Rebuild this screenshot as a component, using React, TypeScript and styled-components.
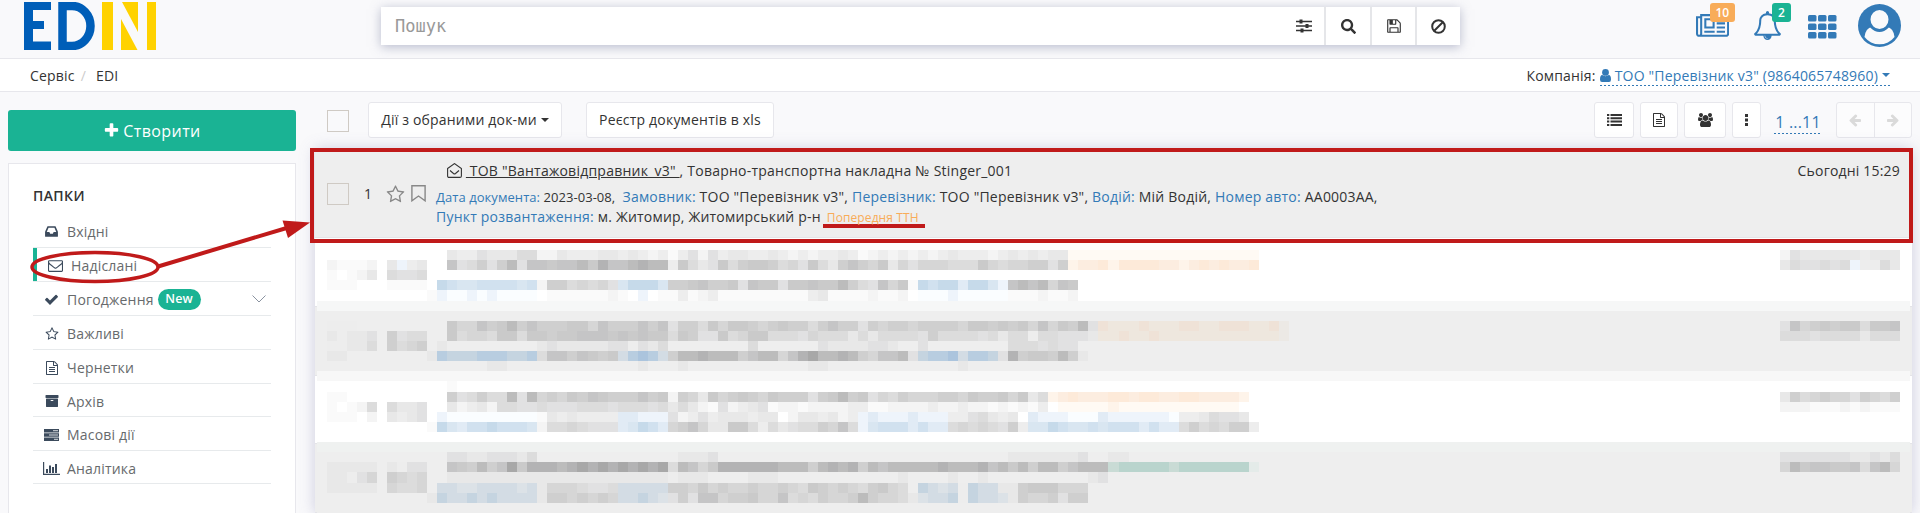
import React from 'react';
import styled, { createGlobalStyle } from 'styled-components';
import { FaSearch } from 'react-icons/fa';

const Global = createGlobalStyle`
  * { box-sizing: border-box; }
  body { margin: 0; background: #f9f9fb; font-family: "Open Sans", "Noto Sans", sans-serif; font-size: 14px; letter-spacing: 0.19px; color: #333; }
`;

const Page = styled.div`
  width: 1920px;
  height: 513px;
  overflow: hidden;
  display: flex;
  flex-direction: column;
`;

const Header = styled.header`
  height: 59px;
  flex: none;
  display: flex;
  border-bottom: 1px solid #e7e7ec;
  padding: 2px 26px 0 24px;
`;

const Search = styled.div`
  display: flex;
  width: 1079px;
  height: 38px;
  margin: 5px 0 0 225px;
  background: #fff;
  box-shadow: 0 2px 10px rgba(120, 125, 160, 0.5);
`;

const SearchInput = styled.div`
  flex: 1;
  padding: 0 0 0 14px;
  font: 17px/39px "DejaVu Sans Mono", monospace;
  letter-spacing: 0;
  color: #999;
`;

const SearchButton = styled.div<{ $w: number; $first?: boolean }>`
  width: ${(p) => p.$w}px;
  display: flex;
  align-items: center;
  justify-content: center;
  border-left: ${(p) => (p.$first ? 'none' : '2px solid #e5e6e9')};
`;

const HeaderIcons = styled.div`
  margin-left: auto;
  display: flex;
  align-items: flex-start;
  color: #337ab7;
`;

const HeaderIcon = styled.div<{ $mt: number; $mr: number }>`
  position: relative;
  margin: ${(p) => `${p.$mt}px ${p.$mr}px 0 0`};
  display: flex;
`;

const Counter = styled.span<{ $bg: string; $x: number; $y: number; $w: number }>`
  position: absolute;
  left: ${(p) => p.$x}px;
  top: ${(p) => p.$y}px;
  width: ${(p) => p.$w}px;
  height: 19px;
  line-height: 19px;
  text-align: center;
  font-size: 12px;
  font-weight: 600;
  letter-spacing: 0;
  color: #fff;
  border-radius: 3px;
  background: ${(p) => p.$bg};
`;

const Crumbs = styled.nav`
  height: 33px;
  flex: none;
  display: flex;
  align-items: center;
  padding: 0 30px 0 30px;
  background: #fff;
  border-bottom: 1px solid #e7e7ec;
`;

const Slash = styled.span`
  color: #ccc;
  margin: 0 10px 0 6px;
`;

const Company = styled.div`
  margin-left: auto;
  display: flex;
  align-items: center;
`;

const dashes = 'repeating-linear-gradient(90deg, #337ab7 0 2px, transparent 2px 4px) left bottom / 100% 1px no-repeat';

const CompanyLink = styled.span`
  margin: 1px 0 0 4px;
  height: 20px;
  padding-bottom: 1px;
  display: flex;
  align-items: center;
  gap: 4px;
  color: #337ab7;
  background: ${dashes};
`;

const Caret = styled.i`
  border: 4px solid transparent;
  border-top-color: currentColor;
  border-bottom: none;
  flex: none;
`;

const Main = styled.main`
  flex: 1;
  display: flex;
  min-height: 0;
`;

const Side = styled.aside`
  width: 288px;
  margin: 18px 0 0 8px;
  display: flex;
  flex-direction: column;
  flex: none;
`;

const Create = styled.div`
  height: 41px;
  flex: none;
  display: flex;
  align-items: center;
  justify-content: center;
  gap: 3px;
  font-size: 16px;
  letter-spacing: 0.4px;
  color: #fff;
  background: #1ab394;
  border-radius: 3px;
`;

const Folders = styled.div`
  flex: 1;
  margin-top: 12px;
  padding: 22px 24px 0;
  background: #fff;
  border: 1px solid #e7e7ec;
  border-bottom: none;
`;

const FoldersTitle = styled.div`
  height: 28px;
  line-height: 20px;
  font-size: 14px;
  font-weight: 600;
  letter-spacing: 0.4px;
`;

const Folder = styled.div<{ $h: number; $active?: boolean }>`
  height: ${(p) => p.$h}px;
  display: flex;
  align-items: center;
  color: #676a6c;
  border-bottom: 1px solid #e7eaec;
  padding: 2px 0 0 ${(p) => (p.$active ? 14 : 10)}px;
  box-shadow: ${(p) => (p.$active ? 'inset 4px 0 0 #1ab394' : 'none')};
`;

const FolderIcon = styled.span`
  width: 17px;
  margin-right: 7px;
  display: flex;
  justify-content: center;
  color: #3b4a5c;
`;

const NewTag = styled.span`
  margin: 0 0 0 4px;
  width: 43px;
  height: 21px;
  line-height: 20px;
  text-align: center;
  border-radius: 11px;
  background: #1ab394;
  color: #fff;
  font-size: 12.5px;
  font-weight: 600;
`;

const Chevron = styled.span`
  margin: 0 5px 2px auto;
  display: flex;
`;

const Content = styled.section`
  flex: 1;
  min-width: 0;
  display: flex;
  flex-direction: column;
  padding: 0 8px 0 19px;
`;

const Toolbar = styled.div`
  height: 57px;
  flex: none;
  display: flex;
  align-items: center;
  padding: 0 0 1px 12px;
`;

const Checkbox = styled.span<{ $mt: number }>`
  width: 22px;
  height: 22px;
  margin-top: ${(p) => p.$mt}px;
  border: 1px solid #cfcac4;
  flex: none;
`;

const ToolButton = styled.div<{ $w: number; $ml: number }>`
  width: ${(p) => p.$w}px;
  height: 36px;
  margin-left: ${(p) => p.$ml}px;
  padding-bottom: 1px;
  display: flex;
  align-items: center;
  justify-content: center;
  gap: 4px;
  background: #fff;
  border: 1px solid #e7e7ec;
  border-radius: 3px;
  flex: none;
`;

const Spacer = styled.span`
  flex: 1;
`;

const Pages = styled.span`
  margin: 4px 14px 0 13px;
  width: 48px;
  text-align: center;
  height: 24px;
  line-height: 24px;
  font-size: 16px;
  color: #337ab7;
  white-space: nowrap;
  background: ${dashes};
`;

const Pager = styled.div`
  width: 76px;
  height: 36px;
  display: flex;
  background: #fcfcfd;
  border: 1px solid #e7e7ec;
  border-radius: 3px;
  color: #dadada;
`;

const PagerHalf = styled.span<{ $flip?: boolean }>`
  flex: 1;
  display: flex;
  align-items: center;
  justify-content: center;
  & + & { border-left: 1px solid #e7e7ec; }
  svg { transform: ${(p) => (p.$flip ? 'scaleX(-1)' : 'none')}; }
`;

const List = styled.div`
  position: relative;
  flex: 1;
  width: 1597px;
  box-shadow: 0 0 14px rgba(120, 120, 170, 0.35);
`;

const Row = styled.div<{ $h: number; $grey?: boolean }>`
  height: ${(p) => p.$h}px;
  background: ${(p) => (p.$grey ? '#eee' : '#fff')};
  border-bottom: 1px solid #e4e4e8;
`;

const DocRow = styled(Row)`
  display: flex;
  padding: 0 12px;
`;

const Num = styled.span`
  width: 22px;
  margin: 35px 0 0 15px;
`;

const Marks = styled.div`
  display: flex;
  gap: 6px;
  margin-top: 36px;
  height: 18px;
  color: #888;
`;

const Doc = styled.div`
  flex: 1;
  margin-left: 10px;
`;

const DocTitle = styled.div`
  display: flex;
  align-items: center;
  height: 21px;
  margin: 11px 0 6px 11px;
  white-space: pre;
  letter-spacing: 0.23px;
`;

const DocLine = styled.div`
  height: 20px;
  line-height: 20px;
  white-space: pre;
  letter-spacing: 0.21px;
`;

const Key = styled.span<{ $small?: boolean }>`
  color: #337ab7;
  font-size: ${(p) => (p.$small ? 13 : 14)}px;
  letter-spacing: ${(p) => (p.$small ? 0.06 : 0.21)}px;
`;

const Small = styled.span`
  font-size: 13px;
  letter-spacing: 0.05px;
`;

const Prelim = styled.span`
  display: inline-block;
  width: 102px;
  height: 21px;
  margin-left: 2px;
  vertical-align: top;
  line-height: 21px;
  padding-left: 4px;
  font-size: 12px;
  letter-spacing: 0.1px;
  color: #f8ac59;
  border-bottom: 4px solid #c01a1a;
`;

const Time = styled.div`
  margin-top: 12px;
  line-height: 20px;
`;

const Frame = styled.div`
  position: absolute;
  left: -5px;
  top: -1px;
  width: 1603px;
  height: 95px;
  border: 4px solid #c01a1a;
`;

const Mosaic = styled.div`
  position: absolute;
  left: 2px;
  top: 101px;
  width: 1593px;
`;

const MosaicLine = styled.div<{ $bg: string }>`
  display: grid;
  grid-template-columns: repeat(159, minmax(0, 1fr));
  height: 10.12px;
  background: ${(p) => p.$bg};
`;

const Callout = styled.svg`
  position: absolute;
  left: 28px;
  top: 215px;
  pointer-events: none;
`;

const shades: Record<string, string> = {
  a: '#fafafa', b: '#f4f4f4', c: '#ededed', d: '#e8e8e8', e: '#e1e1e2', f: '#dcdcdc', g: '#d6d6d6',
  h: '#cfcfcf', i: '#cacaca', j: '#c5c5c6', k: '#bcbcbc', l: '#b3b3b4', m: '#a8a8a8',
  A: '#fafdff', B: '#eef4fb', C: '#e1ebf5', D: '#d9e6f1', E: '#d1e1ef', F: '#c6daea', G: '#b8cde0', H: '#abc4dd',
  X: '#c5d4e0', Y: '#d3dce4', Z: '#dce2e7',
  O: '#fffaf4', P: '#fef4ea', Q: '#fcede0', R: '#fdead9', S: '#eee7de', T: '#efe2d7', N: '#ece9e5',
  U: '#b9d4cd', V: '#c9dbd5', W: '#e4ebe9',
};

const mosaic: [string, string][] = [
  ['#fff', '13:dccedddf 21:fbbdcccddcdcbcaceb 39:ecddccdcbcbccdcabcbcbcbcdcccbcdcdcdd 75:OOOOOOOOOOOOOOOOOOO 146:beddddddcddd'],
  ['#fff', '1:baaab 7:dBcd 13:jefhehkejjijjkiljjklkkcifd 39:eifhiihfgeifdhjhgidgegggfffigfgghhehbhfe 75:PQQRPRRRRQQPQRQRQQR 146:dfeefefBccfd'],
  ['#fff', '1:a.abd 7:feef'],
  ['#fff', '1:aaa 7:aaaa 12:FEDDEEEEDEbhhfgfgeDFFFDhhij 39:hhiejiieiijiikhfejgiaFEFFCFFDBjkjkgji'],
  ['#fff', '11:aBAABABAAAA 23:aaaaaaba.B.aacab 39:caaaaaaaaacdaaaabaab.AAABAAAAAaaabaab'],
  ['#f6f7f7', ''],
  ['#eee', ''],
  ['#eee', '1:ccc 13:iggjhikhjhhhiigjhhhjhjehhf 39:igiihghihhfhjhhehghhghhhhgiihihigjgihkeTSSSTSSSTTSSTTTSSTN 146:ejghihiifiij'],
  ['#eee', '1:dcdde 7:heff 13:ifggfiifiihiijjjijijiifihe 39:eifgiifffegfffdfdffffehffffefdffcffeeedSSTSSTSSSSSSSSSSSSN 146:fffeffffdfff'],
  ['#eee', '1:ccddf 7:hfgh 12:d 22:dedddddeecedf 43:f 50:eddddeed 60:e 69:fffefee'],
  ['#eee', '1:dd 11:dGXXXGGGXXGfjjhjihiYGHGYhkkl 39:kkkhjkkgjlmkklkhgjjkeXGGHYGGXelhiihkhd'],
  ['#eee', '17:dd 32:d 36:d 49:dd 64:d'],
  ['#f7f7f7', ''],
  ['#fff', '13:a'],
  ['#fff', '1:aa 13:hefhffkekghgihjihhhjhibhgd 39:ighihgihhhehikhiegfhggghhgihhigidfPQRQQQRRQRRQQRRQQQQP 146:dhfghggehgfh'],
  ['#fff', '1:a.abf 7:fdde 13:dbcdbffeefeeefffefffefdfdb 39:aebcdeabbabbbbccaabbbbcbbcbbababac.OOOOOPOOOOOOOOOOOO 146:bbbaaababaaa'],
  ['#fff', '1:aaa.b 7:dcde 12:BAAAAAAAAAadcdccccCCBBBebce 39:cdddcdd.bddcdbcBCBBBCBBBccefdcd.CBBBAAACBBBBBBAccdfeed'],
  ['#fff', '11:aFDCEEFEEEDbffgfeeeCDFECghjg 39:ddiifcfdeffhgjfBDEEECECCfgfgfehcDDFEDDEDEEECECCfhfgfhhc'],
  ['#fff', ''],
  ['#eff1f0', ''],
  ['#eee', '13:eeddeeedf 36:ddde 69:ddddddde 79:dd 146:eeeeeeeddedf'],
  ['#eee', '1:ddddd 7:dcee 13:jihkhjmilllklmlmlmlmlmfkjg 39:illllllkkkhklklhkjkkkkklkkkljkikhkkhjkkkVUUUUUVUUUUUUUW 146:gkijjiijfjkg'],
  ['#eee', '1:ddceg 7:hgfg 13:ddddddddddddddddddddddcddd 43:ddd 58:d 63:d 66:d 77:de'],
  ['#eee', '1:ddddd 7:gffg 12:YYZZYYYYZYdgggfeefYYYYYhhgi 39:ghgghgghgfihghgfhigf.XYZYcXYYddhiiiggg'],
  ['#eee', '11:dXYYXYXYYYYdhhghghgYYXYZehej 39:jghhiggjfgfhgghkhggfdZYYXcXYYZdhgghehh'],
  ['#eee', ''],
];

function runs(spec: string) {
  const out: { col: number; span: number; shade: string }[] = [];
  for (const part of spec.split(' ').filter(Boolean)) {
    const [at, cells] = part.split(':');
    const start = Number(at) + 1;
    for (let i = 0; i < cells.length; ) {
      let n = 1;
      while (cells[i + n] === cells[i]) n++;
      if (cells[i] !== '.') out.push({ col: start + i, span: n, shade: shades[cells[i]] });
      i += n;
    }
  }
  return out;
}

const paths = {
  bell: 'M912 1696q0-16-16-16-59 0-101.5-42.5t-42.5-101.5q0-16-16-16t-16 16q0 73 51.5 124.5t124.5 51.5q16 0 16-16zm-666-288h1300q-266-300-266-832 0-51-24-105t-69-103-121.5-80.5-169.5-31.5-169.5 31.5-121.5 80.5-69 103-24 105q0 532-266 832zm1482 0q0 52-38 90t-90 38h-448q0 106-75 181t-181 75-181-75-75-181h-448q-52 0-90-38t-38-90q50-42 91-88t85-119.5 74.5-158.5 50-206 19.5-260q0-152 117-282.5t307-158.5q-8-19-8-39 0-40 28-68t68-28 68 28 28 68q0 20-8 39 190 28 307 158.5t117 282.5q0 139 19.5 260t50 206 74.5 158.5 85 119.5 91 88z',
  inbox: 'M1151 960h316q-1-3-2.5-8.5t-2.5-7.5l-212-496h-708l-212 496q-1 3-2.5 8.5t-2.5 7.5h316l95 192h320zm513 30v482q0 26-19 45t-45 19h-1408q-26 0-45-19t-19-45v-482q0-62 25-123l238-552q10-25 36.5-42t52.5-17h832q26 0 52.5 17t36.5 42l238 552q25 61 25 123z',
  check: 'M1671 566q0 40-28 68l-724 724-136 136q-28 28-68 28t-68-28l-136-136-362-362q-28-28-28-68t28-68l136-136q28-28 68-28t68 28l294 295 656-657q28-28 68-28t68 28l136 136q28 28 28 68z',
  plus: 'M1600 736v192q0 40-28 68t-68 28h-416v416q0 40-28 68t-68 28h-192q-40 0-68-28t-28-68v-416h-416q-40 0-68-28t-28-68v-192q0-40 28-68t68-28h416v-416q0-40 28-68t68-28h192q40 0 68 28t28 68v416h416q40 0 68 28t28 68z',
  star: 'M1201 1004l306-297-422-62-189-382-189 382-422 62 306 297-73 421 378-199 377 199zm527-357q0 22-26 48l-363 354 86 500q1 7 1 20 0 50-41 50-19 0-40-12l-449-236-449 236q-22 12-40 12-21 0-31.5-14.5t-10.5-35.5q0-6 2-20l86-500-364-354q-25-27-25-48 0-37 56-46l502-73 225-455q19-41 49-41t49 41l225 455 502 73q56 9 56 46z',
  file: 'M1596 380q28 28 48 76t20 88v1152q0 40-28 68t-68 28h-1344q-40 0-68-28t-28-68v-1600q0-40 28-68t68-28h896q40 0 88 20t76 48zm-444-244v376h376q-10-29-22-41l-313-313q-12-12-41-22zm384 1528v-1024h-416q-40 0-68-28t-28-68v-416h-768v1536h1280zm-1024-864q0-14 9-23t23-9h704q14 0 23 9t9 23v64q0 14-9 23t-23 9h-704q-14 0-23-9t-9-23v-64zm736 224q14 0 23 9t9 23v64q0 14-9 23t-23 9h-704q-14 0-23-9t-9-23v-64q0-14 9-23t23-9h704zm0 256q14 0 23 9t9 23v64q0 14-9 23t-23 9h-704q-14 0-23-9t-9-23v-64q0-14 9-23t23-9h704z',
  archive: 'M1088 832q0-26-19-45t-45-19h-256q-26 0-45 19t-19 45 19 45 45 19h256q26 0 45-19t19-45zm576-192v960q0 26-19 45t-45 19h-1408q-26 0-45-19t-19-45v-960q0-26 19-45t45-19h1408q26 0 45 19t19 45zm64-448v256q0 26-19 45t-45 19h-1536q-26 0-45-19t-19-45v-256q0-26 19-45t45-19h1536q26 0 45 19t19 45z',
  envelope: 'M1664 1504v-768q-32 36-69 66-268 206-426 338-51 43-83 67t-86.5 48.5-102.5 24.5h-2q-48 0-102.5-24.5t-86.5-48.5-83-67q-158-132-426-338-37-30-69-66v768q0 13 9.5 22.5t22.5 9.5h1472q13 0 22.5-9.5t9.5-22.5zm0-1051v-24.5l-.5-13-3-12.5-5.5-9-9-7.5-14-2.5h-1472q-13 0-22.5 9.5t-9.5 22.5q0 168 147 284 193 152 401 317 6 5 35 29.5t46 37.5 44.5 31.5 50.5 27.5 43 9h2q20 0 43-9t50.5-27.5 44.5-31.5 46-37.5 35-29.5q208-165 401-317 54-43 100.5-115.5t46.5-131.5zm128-37v1088q0 66-47 113t-113 47h-1472q-66 0-113-47t-47-113v-1088q0-66 47-113t113-47h1472q66 0 113 47t47 113z',
  floppy: 'M512 1536h768v-384h-768v384zm896 0h128v-896q0-14-10-38.5t-20-34.5l-281-281q-10-10-34-20t-39-10v416q0 40-28 68t-68 28h-576q-40 0-68-28t-28-68v-416h-128v1280h128v-416q0-40 28-68t68-28h832q40 0 68 28t28 68v416zm-384-928v-320q0-13-9.5-22.5t-22.5-9.5h-192q-13 0-22.5 9.5t-9.5 22.5v320q0 13 9.5 22.5t22.5 9.5h192q13 0 22.5-9.5t9.5-22.5zm640 32v928q0 40-28 68t-68 28h-1344q-40 0-68-28t-28-68v-1344q0-40 28-68t68-28h928q40 0 88 20t76 48l280 280q28 28 48 76t20 88z',
  news: 'M1024 512h-384v384h384v-384zm128 640v128h-640v-128h640zm0-768v640h-640v-640h640zm640 768v128h-512v-128h512zm0-256v128h-512v-128h512zm0-256v128h-512v-128h512zm0-256v128h-512v-128h512zm-1536 960v-960h-128v960q0 26 19 45t45 19 45-19 19-45zm1664 0v-1088h-1536v1088q0 33-11 64h1483q26 0 45-19t19-45zm128-1216v1216q0 80-56 136t-136 56h-1664q-80 0-136-56t-56-136v-1088h256v-128h1792z',
  group: 'M593 896q-162 5-265 128h-134q-82 0-138-40.5t-56-118.5q0-353 124-353 6 0 43.5 21t97.5 42.5 119 21.5q67 0 133-23-5 37-5 66 0 139 81 256zm1071 637q0 120-73 189.5t-194 69.5h-874q-121 0-194-69.5t-73-189.5q0-53 3.5-103.5t14-109 26.5-108.5 43-97.5 62-81 85.5-53.5 111.5-20q10 0 43 21.5t73 48 107 48 135 21.5 135-21.5 107-48 73-48 43-21.5q61 0 111.5 20t85.5 53.5 62 81 43 97.5 26.5 108.5 14 109 3.5 103.5zm-1024-1277q0 106-75 181t-181 75-181-75-75-181 75-181 181-75 181 75 75 181zm704 384q0 159-112.5 271.5t-271.5 112.5-271.5-112.5-112.5-271.5 112.5-271.5 271.5-112.5 271.5 112.5 112.5 271.5zm576 225q0 78-56 118.5t-138 40.5h-134q-103-123-265-128 81-117 81-256 0-29-5-66 66 23 133 23 59 0 119-21.5t97.5-42.5 43.5-21q124 0 124 353zm-128-609q0 106-75 181t-181 75-181-75-75-181 75-181 181-75 181 75 75 181z',
  arrow: 'M1664 896v128q0 53-32.5 90.5t-84.5 37.5h-704l293 294q38 36 38 90t-38 90l-75 76q-37 37-90 37-52 0-91-37l-651-652q-37-37-37-90 0-52 37-91l651-650q38-38 91-38 52 0 90 38l75 74q38 38 38 91t-38 91l-293 293h704q52 0 84.5 37.5t32.5 90.5z',
};

function Icon({ name, size, vw = 1792 }: { name: keyof typeof paths; size: number; vw?: number }) {
  return (
    <svg width={(size * vw) / 1792} height={size} viewBox={`0 0 ${vw} 1792`} fill="currentColor">
      <path d={paths[name]} />
    </svg>
  );
}

const Logo = () => (
  <svg width="132" height="48" viewBox="0 0 132 48">
    <g fill="#005eb8">
      <rect width="9" height="48" />
      <rect width="27" height="8" />
      <rect y="19" width="20" height="8" />
      <rect y="39.500" width="27" height="8.500" />
    </g>
    <path d="M38.500 4H48a18.500 20 0 0 1 0 40H38.500Z" fill="none" stroke="#005eb8" strokeWidth="8.500" />
    <g fill="#ffd200">
      <rect x="78" width="11" height="48" />
      <rect x="123" width="9" height="48" />
      <path d="M98 0h16v30Z" />
      <path d="M97 17v31h16.500Z" />
    </g>
  </svg>
);

const Sliders = () => (
  <svg width="16" height="14" viewBox="0 0 16 14" fill="none" stroke="#333">
    <path d="M0 2.500h16M0 7h16M0 11.500h16" strokeWidth="1.300" />
    <path d="M5 .5v4M11 5v4M6 9.500v4" strokeWidth="3" />
  </svg>
);

const Ban = () => (
  <svg width="15" height="15" viewBox="0 0 15 15" fill="none" stroke="#333" strokeWidth="2">
    <circle cx="7.500" cy="7.500" r="6.300" />
    <path d="M12 3 3 12" />
  </svg>
);

const Apps = () => (
  <svg width="29" height="24" viewBox="0 0 29 24" fill="currentColor">
    {[0, 8.5, 17].map((y) => [0, 10, 20].map((x) => <rect key={`${x}-${y}`} x={x} y={y} width="8.500" height="6.500" rx="1.500" />))}
  </svg>
);

const Avatar = () => (
  <svg width="43" height="43" viewBox="0 0 43 43">
    <circle cx="21.500" cy="21.500" r="21.500" fill="#337ab7" />
    <path d="M6.500 33q1-9 7.500-10h15q6.500 1 7.500 10a19 19 0 0 1-30 0Z" fill="#f9f9fb" />
    <ellipse cx="21.500" cy="15.500" rx="10.500" ry="11" fill="#f9f9fb" stroke="#337ab7" strokeWidth="3" />
  </svg>
);

const Person = () => (
  <svg width="11" height="13" viewBox="0 0 11 13" fill="currentColor">
    <circle cx="5.500" cy="3.400" r="3.400" />
    <path d="M0 10.500Q0 6 2.200 6q3.300 2.300 6.600 0Q11 6 11 10.500 11 13 9 13H2q-2 0-2-2.500Z" />
  </svg>
);

const ListIcon = () => (
  <svg width="15" height="12" viewBox="0 0 15 12" fill="#333">
    {[0, 3.3, 6.6, 9.9].map((y) => (
      <path key={y} d={`M0 ${y}h2.300v2H0zM3.500 ${y}H15v2H3.500z`} />
    ))}
  </svg>
);

const Dots = () => (
  <svg width="3" height="12" viewBox="0 0 3 12" fill="#333">
    <path d="M0 0h3v3H0zM0 4.500h3v3H0zM0 9h3v3H0z" />
  </svg>
);

const Server = () => (
  <svg width="15" height="12" viewBox="0 0 15 12">
    <path d="M0 0h15v3.400H0zM0 4.300h15v3.400H0zM0 8.600h15V12H0z" fill="currentColor" />
    <path d="M9 1.700h5M5 6h9M10 10.300h4" stroke="#fff" strokeWidth=".8" />
  </svg>
);

const Chart = () => (
  <svg width="17" height="13" viewBox="0 0 17 13" fill="currentColor">
    <path d="M0 0h1.200v11.800H17V13H0zM3 7h2v4H3zM6 3.500h2V11H6zM9 5h2v6H9zM12 2h2v9h-2z" />
  </svg>
);

const OpenMail = () => (
  <svg width="15" height="15" viewBox="0 0 15 15" fill="none" stroke="#333" strokeWidth="1.100">
    <path d="M.6 5.500 7.500.6l6.900 4.900v7.400q0 1.500-1.500 1.500H2.100Q.6 14.400.6 12.900Z" />
    <path d="m3 7.500 3.500 3q1 .8 2 0l3.500-3" />
  </svg>
);

const Bookmark = () => (
  <svg width="15" height="17" viewBox="0 0 15 17" fill="none" stroke="currentColor" strokeWidth="1.400">
    <path d="M.9.8h13.200v15L7.500 11 .9 15.800Z" />
  </svg>
);

const folders: { label: string; icon: React.ReactNode; h: number; active?: boolean; tag?: string }[] = [
  { label: 'Вхідні', icon: <Icon name="inbox" size={15} />, h: 34 },
  { label: 'Надіслані', icon: <Icon name="envelope" size={15} />, h: 34, active: true },
  { label: 'Погодження', icon: <Icon name="check" size={15} />, h: 34, tag: 'New' },
  { label: 'Важливі', icon: <Icon name="star" size={14} />, h: 34 },
  { label: 'Чернетки', icon: <Icon name="file" size={14} />, h: 34 },
  { label: 'Архів', icon: <Icon name="archive" size={14} />, h: 33 },
  { label: 'Масові дії', icon: <Server />, h: 34 },
  { label: 'Аналітика', icon: <Chart />, h: 33 },
];

export default function App() {
  return (
    <Page>
      <Global />
      <Header>
        <Logo />
        <Search>
          <SearchInput>Пошук</SearchInput>
          <SearchButton $w={40} $first><Sliders /></SearchButton>
          <SearchButton $w={46}><FaSearch size={15} /></SearchButton>
          <SearchButton $w={45}><Icon name="floppy" size={16} /></SearchButton>
          <SearchButton $w={45}><Ban /></SearchButton>
        </Search>
        <HeaderIcons>
          <HeaderIcon $mt={10} $mr={24}>
            <Icon name="news" size={29} vw={2048} />
            <Counter $bg="#f8ac59" $x={14} $y={-9} $w={25}>10</Counter>
          </HeaderIcon>
          <HeaderIcon $mt={9} $mr={26}>
            <Icon name="bell" size={29} />
            <Counter $bg="#1ab394" $x={19} $y={-8} $w={19}>2</Counter>
          </HeaderIcon>
          <HeaderIcon $mt={13} $mr={21}><Apps /></HeaderIcon>
          <HeaderIcon $mt={2} $mr={-7}><Avatar /></HeaderIcon>
        </HeaderIcons>
      </Header>
      <Crumbs>
        Сервіс<Slash>/</Slash>EDI
        <Company>
          Компанія:
          <CompanyLink><Person />ТОО "Перевізник v3" (9864065748960)<Caret /></CompanyLink>
        </Company>
      </Crumbs>
      <Main>
        <Side>
          <Create><Icon name="plus" size={17} />Створити</Create>
          <Folders>
            <FoldersTitle>ПАПКИ</FoldersTitle>
            {folders.map((f) => (
              <Folder key={f.label} $h={f.h} $active={f.active}>
                <FolderIcon>{f.icon}</FolderIcon>
                {f.label}
                {f.tag && <NewTag>{f.tag}</NewTag>}
                {f.tag && (
                  <Chevron>
                    <svg width="14" height="8" viewBox="0 0 14 8" fill="none" stroke="#8a93a0"><path d="m.5.500 6.500 6.500L13.500.5" /></svg>
                  </Chevron>
                )}
              </Folder>
            ))}
          </Folders>
        </Side>
        <Content>
          <Toolbar>
            <Checkbox $mt={2} />
            <ToolButton $w={194} $ml={19}>Дії з обраними док-ми<Caret /></ToolButton>
            <ToolButton $w={188} $ml={24}>Реєстр документів в xls</ToolButton>
            <Spacer />
            <ToolButton $w={40} $ml={0}><ListIcon /></ToolButton>
            <ToolButton $w={38} $ml={6}><Icon name="file" size={14} /></ToolButton>
            <ToolButton $w={42} $ml={6}><Icon name="group" size={14} vw={1920} /></ToolButton>
            <ToolButton $w={29} $ml={6}><Dots /></ToolButton>
            <Pages>1 ...11</Pages>
            <Pager>
              <PagerHalf><Icon name="arrow" size={14} /></PagerHalf>
              <PagerHalf $flip><Icon name="arrow" size={14} /></PagerHalf>
            </Pager>
          </Toolbar>
          <List>
            <DocRow $h={89} $grey>
              <Checkbox $mt={34} />
              <Num>1</Num>
              <Marks>
                <Icon name="star" size={19} />
                <Bookmark />
              </Marks>
              <Doc>
                <DocTitle>
                  <OpenMail />
                  <span> </span><u> ТОВ "Вантажовідправник_v3" </u>, Товарно-транспортна накладна № Stinger_001
                </DocTitle>
                <DocLine>
                  <Key $small>Дата документа:</Key><Small> 2023-03-08, </Small><Key> Замовник:</Key> ТОО "Перевізник v3", <Key>Перевізник:</Key> ТОО "Перевізник v3", <Key>Водій:</Key> Мій Водій, <Key>Номер авто:</Key> АА0003АА,
                </DocLine>
                <DocLine>
                  <Key>Пункт розвантаження:</Key> м. Житомир, Житомирський р-н<Prelim>Попередня ТТН</Prelim>
                </DocLine>
              </Doc>
              <Time>Сьогодні 15:29</Time>
            </DocRow>
            <Row $h={69} />
            <Row $h={69} $grey />
            <Row $h={68} />
            <Row $h={69} $grey />
            <Mosaic>
              {mosaic.map(([bg, spec], i) => (
                <MosaicLine key={i} $bg={bg}>
                  {runs(spec).map((r) => (
                    <span key={r.col} style={{ gridRow: 1, gridColumn: `${r.col} / span ${r.span}`, background: r.shade }} />
                  ))}
                </MosaicLine>
              ))}
            </Mosaic>
            <Frame />
          </List>
        </Content>
      </Main>
      <Callout width="284" height="72" viewBox="0 0 284 72">
        <ellipse cx="67" cy="52" rx="63" ry="14.500" fill="none" stroke="#c01a1a" strokeWidth="3.500" />
        <path d="M130 51.500 262 12" stroke="#c01a1a" strokeWidth="4" />
        <path d="M254.500 5.500 282 7.500 260 23Z" fill="#c01a1a" />
      </Callout>
    </Page>
  );
}
